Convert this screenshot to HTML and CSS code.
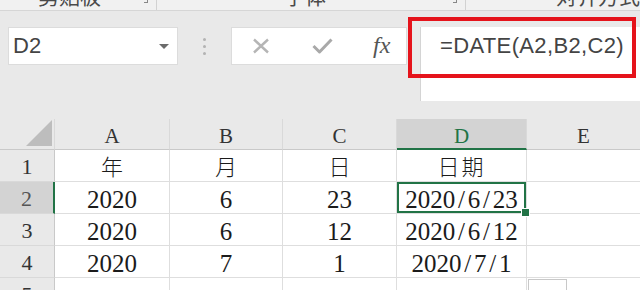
FILE: index.html
```html
<!DOCTYPE html>
<html lang="zh">
<head>
<meta charset="utf-8">
<link rel="stylesheet" href="styles.css">
</head>
<body>
<div class="app">
  <div class="ribbon">
    <div class="rgroup g1"><span class="rlabel">剪贴板</span><span class="launch"></span></div>
    <div class="rgroup g2"><span class="rlabel">字体</span><span class="launch"></span></div>
    <div class="rgroup g3"><span class="rlabel">对齐方式</span></div>
  </div>

  <div class="fbar">
    <div class="namebox">
      <span class="ref">D2</span>
      <svg class="caret" width="10" height="5" viewBox="0 0 10 5"><polygon points="0,0 10,0 5,5" fill="#6b6b6b"/></svg>
    </div>
    <div class="grip"><i></i><i></i><i></i></div>
    <div class="btns">
      <svg class="ico-x" width="18" height="16" viewBox="0 0 18 16"><path d="M2 1.5 L16 14.5 M16 1.5 L2 14.5" stroke="#b5b5b5" stroke-width="2.4" fill="none"/></svg>
      <svg class="ico-ok" width="21" height="17" viewBox="0 0 21 17"><path d="M1.5 9 L7.5 15 L19.5 2.5" stroke="#a9a9a9" stroke-width="3" fill="none" stroke-linejoin="round"/></svg>
      <span class="fx">fx</span>
    </div>
    <div class="formula">=DATE(A2,B2,C2)</div>
  </div>

  <div class="sheet">
    <div class="hd corner"><svg width="26" height="26" viewBox="0 0 26 26"><polygon points="0,26 26,26 26,0" fill="#bdbdbd"/></svg></div>
    <div class="hd col">A</div>
    <div class="hd col">B</div>
    <div class="hd col">C</div>
    <div class="hd col sel">D</div>
    <div class="hd col last">E</div>

    <div class="rh">1</div>
    <div class="c cjk">年</div>
    <div class="c cjk">月</div>
    <div class="c cjk">日</div>
    <div class="c cjk dcol">日期</div>
    <div class="c last"></div>

    <div class="rh sel">2</div>
    <div class="c">2020</div>
    <div class="c">6</div>
    <div class="c">23</div>
    <div class="c dcol active">2020<span class="sl">/</span>6<span class="sl">/</span>23</div>
    <div class="c last"></div>

    <div class="rh">3</div>
    <div class="c">2020</div>
    <div class="c">6</div>
    <div class="c">12</div>
    <div class="c dcol">2020<span class="sl">/</span>6<span class="sl">/</span>12</div>
    <div class="c last"></div>

    <div class="rh">4</div>
    <div class="c">2020</div>
    <div class="c">7</div>
    <div class="c">1</div>
    <div class="c dcol">2020<span class="sl">/</span>7<span class="sl">/</span>1</div>
    <div class="c last"></div>

    <div class="rh">5</div>
    <div class="c"></div>
    <div class="c"></div>
    <div class="c"></div>
    <div class="c dcol"></div>
    <div class="c last"><span class="qa"></span></div>
  </div>

  <div class="redmark"></div>
</div>
</body>
</html>
```

FILE: styles.css
```css
* { box-sizing: border-box; }
html, body { margin: 0; padding: 0; }
body {
  width: 640px;
  height: 290px;
  overflow: hidden;
  background: #e9e9e9;
  font-family: "Liberation Sans", Arial, sans-serif;
}
.app { position: relative; width: 640px; height: 290px; overflow: hidden; }

/* ribbon strip */
.ribbon {
  display: flex;
  height: 11px;
  background: #f1f1f1;
  border-bottom: 1px solid #d6d6d6;
  overflow: hidden;
}
.rgroup {
  position: relative;
  height: 10px;
  border-right: 1px solid #d2d2d2;
}
.g1 { width: 163px; padding-left: 38px; }
.g2 { width: 318px; padding-left: 127px; }
.g3 { flex: 1; padding-left: 90px; border-right: none; }
.rlabel {
  display: block;
  margin-top: -17px;
  font-family: "Noto Sans CJK SC", sans-serif;
  font-size: 21px;
  line-height: 24px;
  color: #4a4a4a;
  white-space: nowrap;
}
.launch {
  position: absolute;
  right: 8px;
  top: 0;
  width: 4px;
  height: 3px;
  border-right: 1px solid #888;
  border-bottom: 1px solid #888;
}

/* formula bar */
.fbar {
  display: flex;
  align-items: flex-start;
  margin-top: 16px;
  padding-left: 8px;
  height: 74px;
  margin-bottom: 18px;
}
.namebox {
  width: 170px;
  height: 38px;
  background: #fff;
  border: 1px solid #dcdcdc;
  display: flex;
  align-items: center;
  justify-content: space-between;
  padding: 0 8px 0 4px;
}
.ref { font-size: 22px; line-height: 36px; color: #444; }
.caret { margin-top: 1px; }
.grip {
  width: 53px;
  height: 38px;
  display: flex;
  flex-direction: column;
  align-items: center;
  justify-content: center;
  gap: 4px;
}
.grip i {
  display: block;
  width: 3px;
  height: 3px;
  border-radius: 50%;
  background: #b3b3b3;
}
.btns {
  width: 176px;
  height: 38px;
  background: #fff;
  border: 1px solid #dcdcdc;
  display: flex;
  align-items: center;
  padding-left: 20px;
}
.ico-ok { margin-left: 42px; margin-top: -2px; }
.fx {
  margin-left: 40px;
  font-family: "Liberation Serif", serif;
  font-style: italic;
  font-size: 24px;
  color: #555;
  line-height: 36px;
  margin-top: -2px;
}
.formula {
  margin-left: 13px;
  width: 220px;
  height: 74px;
  background: #fff;
  border-left: 1px solid #d4d4d4;
  padding-left: 19px;
  font-size: 22px;
  letter-spacing: 0.35px;
  line-height: 38px;
  color: #444;
  white-space: nowrap;
}

/* sheet grid */
.sheet {
  display: grid;
  grid-template-columns: 55px 115px 113px 114px 130px 113px;
  grid-template-rows: 31px 32px 32px 32px 32px 32px;
  font-family: "Liberation Serif", "Times New Roman", serif;
  color: #1b1b1b;
}
.hd {
  background: #e9e9e9;
  border-bottom: 1px solid #c9c9c9;
  border-right: 1px solid #d9d9d9;
  text-align: center;
  font-size: 21px;
  line-height: 31px;
  padding-top: 2px;
  color: #333;
}
.hd.last { border-right: none; }
.corner {
  display: flex;
  align-items: flex-end;
  justify-content: flex-end;
  padding: 0 2px 3px 0;
}
.corner svg { display: block; }
.hd.sel {
  background: #d3d3d3;
  color: #217346;
  border-bottom: 2px solid #217346;
}
.rh {
  background: #e9e9e9;
  border-right: 1px solid #c9c9c9;
  border-bottom: 1px solid #d9d9d9;
  text-align: center;
  font-size: 22px;
  line-height: 31px;
  padding-top: 1px;
  color: #333;
}
.rh.sel {
  background: #d3d3d3;
  border-right: 2px solid #217346;
  color: #555;
}
.c {
  position: relative;
  background: #fff;
  border-right: 1px solid #dedede;
  border-bottom: 1px solid #dedede;
  text-align: center;
  font-size: 25px;
  line-height: 31px;
  padding-top: 2px;
  white-space: nowrap;
}
.c.last { border-right: none; }
.cjk {
  font-family: "Noto Sans CJK SC", sans-serif;
  font-size: 22px;
  font-weight: 300;
  line-height: 31px;
  padding-top: 0;
}
.dcol.cjk { letter-spacing: 2px; }
.sl { display: inline-block; margin: 0 2.8px; }
.active {
  box-shadow: inset 0 0 0 2px #217346;
}
.active::after {
  content: "";
  position: absolute;
  right: -4px;
  bottom: -4px;
  width: 7px;
  height: 7px;
  background: #217346;
  border: 1px solid #fff;
  z-index: 2;
}
.qa {
  position: absolute;
  left: 1px;
  top: 1px;
  width: 39px;
  height: 14px;
  background: #fff;
  border: 1px solid #c8c8c8;
}

/* annotation overlay */
.redmark {
  position: absolute;
  left: 408px;
  top: 17px;
  width: 228px;
  height: 61px;
  border: 4px solid #e5131b;
}
```
